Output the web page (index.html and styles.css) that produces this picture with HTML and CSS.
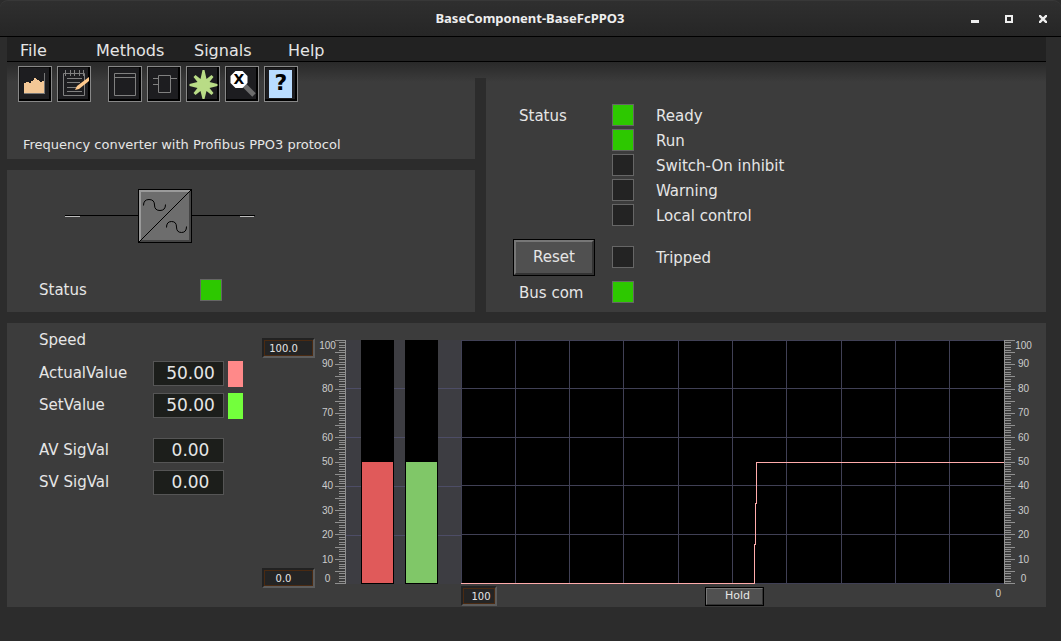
FILE: index.html
```
<!DOCTYPE html>
<html lang="en">
<head>
<meta charset="utf-8">
<title>BaseComponent-BaseFcPPO3</title>
<meta name="viewport" content="width=device-width, initial-scale=1.0">
<link rel="stylesheet" href="styles.css">
</head>

<body>
<header class="titlebar">
  <h1>BaseComponent-BaseFcPPO3</h1>
  <div class="winbuttons">
    <button aria-label="Minimize"><svg width="8" height="8"><path d="M0 5h8v3h-8z"/></svg></button>
    <button aria-label="Maximize"><svg width="8" height="8"><path fill-rule="evenodd" d="M0 0h8v8h-8zM2 2v4h4v-4z"/></svg></button>
    <button aria-label="Close"><svg width="8" height="8"><path d="M0 0L8 8M8 0L0 8" stroke="#eee" stroke-width="2.4"/></svg></button>
  </div>
</header>

<div class="window">
<nav class="menubar">
  <button>File</button>
  <button>Methods</button>
  <button>Signals</button>
  <button>Help</button>
</nav>

<main>
<div class="upper">
  <div class="left">
    <section class="head">
      <div class="toolbar">
        <button aria-label="Trend">
          <svg width="34" height="36"><path d="M6 17h2v-1h3v1h2v-2h2v-1h1v-2h2v1h1v1h2v1h1v1h2v-1h2v12h-20z" fill="#f3c796"/><path d="M26.5 7v21M6 27.5h21" stroke="#777"/></svg>
        </button>
        <button aria-label="Note">
          <svg width="34" height="36" fill="none"><path d="M6.5 7.5h21v22h-21zM8.5 4v6M13.5 4v6M17.5 4v6M22.5 4v6M26.5 4v6M10 12.5h15M10 16.5h13M10 21.5h10M10 25.5h15" stroke="#808080"/><path d="M18 24l2-4 12-9v4l-10 8z" fill="#ffc98c"/></svg>
        </button>
        <button class="gap" aria-label="Object graph">
          <svg width="34" height="36" fill="none"><path d="M6.5 7.5h21v22h-21zM6.5 11.5h21" stroke="#808080"/></svg>
        </button>
        <button aria-label="Type graph">
          <svg width="34" height="36" fill="none"><path d="M11.5 9.5h12v17h-12zM6 12.5h5M6 18.5h5M23 12.5h7" stroke="#808080"/></svg>
        </button>
        <button aria-label="Navigator">
          <svg width="34" height="36"><path d="M16.5 4h2l2 9 5-4 2 2-4 5 8 2v2l-8 2 4 5-2 2-5-4-2 8h-2l-2-8-5 4-2-2 4-5-8-2v-2l8-2-4-5 2-2 5 4z" fill="#b9dc86"/></svg>
        </button>
        <button aria-label="Crossreferences">
          <svg width="34" height="36"><path d="M19 19L29 29" stroke="#6c6c6c" stroke-width="5"/><path d="M10.5 5h7l5 5v7l-5 5h-7l-5-5v-7z" fill="#fff"/><text x="14" y="18" class="x">X</text></svg>
        </button>
        <button aria-label="Help">
          <svg width="34" height="36"><path d="M5 4h23v28h-23z" fill="#b9dcff"/><text x="17" y="24" class="q">?</text></svg>
        </button>
      </div>
      <p>Frequency converter with Profibus PPO3 protocol</p>
    </section>

    <section class="symbol">
      <svg width="190" height="54" fill="none" shape-rendering="crispEdges">
        <path d="M0 26.5h190" stroke="#000"/>
        <path d="M0 27.5h15M175 27.5h14" stroke="#bbb"/>
        <path d="M73 0h54v54h-54z" fill="#000"/>
        <path d="M74 1h52v52h-52z" fill="#6d6d6d"/>
        <path d="M74 53v-52h52l-2 2h-48v48z" fill="#9a9a9a"/>
        <path d="M126 1v52h-52l2-2h48v-48z" fill="#444"/>
        <path d="M74 53L126 1" stroke="#000"/>
        <g stroke="#000" shape-rendering="auto">
          <path d="M78.5 16.5q0-6 5.5-6t5.5 5.5t5.5 5.5t5.5-6"/>
          <path d="M101.5 38.5q0-6 5-6t5 5.5t5 5.5t5-6"/>
        </g>
      </svg>
      <div class="state"><span>Status</span><i class="led on"></i></div>
    </section>
  </div>

  <div class="divider"></div>

  <section class="status">
    <div class="row"><span>Status</span><i class="led on"></i><span>Ready</span></div>
    <div class="row"><span></span><i class="led on"></i><span>Run</span></div>
    <div class="row"><span></span><i class="led"></i><span>Switch-On inhibit</span></div>
    <div class="row"><span></span><i class="led"></i><span>Warning</span></div>
    <div class="row"><span></span><i class="led"></i><span>Local control</span></div>
    <div class="row trip"><button class="reset">Reset</button><i class="led"></i><span>Tripped</span></div>
    <div class="row bus"><span>Bus com</span><i class="led on"></i></div>
  </section>
</div>

<section class="speed">
  <div class="values">
    <h2>Speed</h2>
    <div class="val"><label for="av">ActualValue</label><input id="av" value="50.00" readonly><i class="red"></i></div>
    <div class="val"><label for="sv">SetValue</label><input id="sv" value="50.00" readonly><i class="green"></i></div>
    <div class="val sig"><label for="avs">AV SigVal</label><input id="avs" value="0.00" readonly></div>
    <div class="val"><label for="svs">SV SigVal</label><input id="svs" value="0.00" readonly></div>
  </div>

  <div class="limits">
    <input class="limit" aria-label="Max" value="100.0">
    <input class="limit" aria-label="Min" value="0.0">
  </div>

  <div class="scale">
    <ol><li>100<li>90<li>80<li>70<li>60<li>50<li>40<li>30<li>20<li>10<li>0</ol>
    <svg class="ticks" width="11" height="244"><path d="M10.5 0v244"/></svg>
  </div>

  <div class="bars">
    <div class="bar"><div class="fill av" style="height:50%"></div></div>
    <div class="bar"><div class="fill sv" style="height:50%"></div></div>
  </div>

  <div class="trend">
    <svg class="curve" viewBox="0 0 543 244" preserveAspectRatio="none">
      <path class="grid" d="M0 .5H543M0 48.5H543M0 97.5H543M0 145.5H543M0 194.5H543M0 243.5H543M.5 0V244M54.5 0V244M108.5 0V244M162.5 0V244M217.5 0V244M271.5 0V244M325.5 0V244M380.5 0V244M434.5 0V244M488.5 0V244"/>
      <path class="line" d="M0 243.5H293.5V204.5H294.5V163.5H295.5V122.5H543"/>
    </svg>
    <div class="time">
      <input class="limit" aria-label="Time range" value="100">
      <button class="hold">Hold</button>
      <span>0</span>
    </div>
  </div>

  <div class="scale right">
    <svg class="ticks" width="11" height="244"><path d="M.5 0v244"/></svg>
    <ol><li>100<li>90<li>80<li>70<li>60<li>50<li>40<li>30<li>20<li>10<li>0</ol>
  </div>
</section>
</main>
</div>

<script>
// one tick per unit, long tick every fifth
var scales = document.querySelectorAll('.ticks');
for (var n = 0; n < scales.length; n++) {
  var right = scales[n].parentNode.className.indexOf('right') > 0;
  var d = '';
  for (var i = 0; i <= 100; i++) {
    var y = Math.round(i * 243 / 100) + 0.5;
    var len = i % 5 ? 7 : 11;
    d += 'M' + (right ? 0 : 11 - len) + ' ' + y + 'h' + len;
  }
  var path = scales[n].querySelector('path');
  path.setAttribute('d', path.getAttribute('d') + d);
}
</script>
</body>
</html>
```
FILE: styles.css
```
* {
 box-sizing:border-box;
}
body {
 margin:0;
 min-height:100vh;
 background-color:#2c2c2c;
 color:#e6e6e6;
 font:15px/20px "DejaVu Sans", sans-serif;
}
button, input {
 margin:0;
 padding:0;
 border:0;
 border-radius:0;
 background:none;
 color:inherit;
 font:inherit;
}
h1, h2, p, ol {
 margin:0;
 padding:0;
 font-weight:normal;
 list-style:none;
}
svg {
 display:block;
}
.titlebar {
 display:grid;
 grid-template-columns:1fr auto 1fr;
 align-items:center;
 height:37px;
 padding-right:1px;
 background:linear-gradient(#2f2f2f,#262626);
 border-top:1px solid #383838;
 border-bottom:1px solid #000;
 border-radius:8px 8px 0 0;
}
.titlebar h1 {
 grid-column:2;
 padding-bottom:2px;
 color:#eee;
 font:bold 13px/20px "Noto Sans", sans-serif;
}
.winbuttons {
 display:flex;
 justify-content:flex-end;
}
.winbuttons button {
 display:flex;
 align-items:center;
 justify-content:center;
 width:34px;
 height:30px;
}
.winbuttons svg {
 fill:#eee;
}
.window {
 margin:0 15px 0 7px;
}
.menubar {
 display:grid;
 grid-template-columns:76px 98px 94px auto;
 justify-content:start;
 height:25px;
 padding:3px 0 0 13px;
 background-color:#222;
 border-bottom:1px solid #000;
}
.menubar button {
 text-align:left;
 font-size:16px;
 line-height:20px;
}
.upper {
 display:grid;
 grid-template-columns:468fr 11px 560fr;
 background:linear-gradient(#292929,#3c3c3c 20px);
}
.divider {
 margin-top:16px;
 background-color:#2c2c2c;
}
.head {
 height:97px;
}
.toolbar {
 display:flex;
 gap:5px;
 padding:4px 0 0 11px;
}
.toolbar button {
 width:34px;
 height:36px;
 background-color:#1d1d20;
 box-shadow:inset 0 0 0 1px #888, inset -3px -3px #000, inset 2px 2px #111;
}
.toolbar .gap {
 margin-left:12px;
}
.x, .q {
 font-weight:bold;
 font-size:14px;
 text-anchor:middle;
}
.q {
 font-size:22px;
}
.head p {
 padding:33px 0 0 16px;
 font-size:13px;
}
.symbol {
 height:153px;
 border-top:11px solid #2c2c2c;
 padding-top:19px;
}
.symbol svg {
 margin-left:58px;
}
.state {
 display:grid;
 grid-template-columns:161px 22px;
 align-items:center;
 padding:36px 0 0 32px;
}
.led {
 width:22px;
 height:22px;
 background-color:#232323;
 border:1px solid #666;
}
.led.on {
 background-color:#2dc800;
}
.status {
 padding:41px 0 2px 27px;
}
.row {
 display:grid;
 grid-template-columns:99px 44px auto;
 align-items:center;
 height:25px;
}
.row .led {
 margin-bottom:2px;
}
.row span:first-child {
 padding-left:6px;
}
.trip {
 height:37px;
 margin-top:11px;
}
.bus {
 height:34px;
}
.reset {
 width:82px;
 height:37px;
 padding-bottom:2px;
 background-color:#505050;
 border:3px solid;
 border-color:#777 #333 #333 #777;
 outline:1px solid #000;
 outline-offset:-1px;
}
.speed {
 display:flex;
 margin-top:11px;
 padding:17px 14px 0 32px;
 min-height:284px;
 background-color:#3c3c3c;
}
.values h2 {
 margin-top:-10px;
 font-size:15px;
 line-height:20px;
}
.values {
 width:223px;
}
.val {
 display:grid;
 grid-template-columns:114px 71px 15px;
 align-items:center;
 height:32px;
}
.values h2 + .val {
 margin-top:7px;
}
.val.sig {
 margin-top:13px;
}
.val input {
 width:71px;
 height:25px;
 padding-left:4px;
 background-color:#1c1e1b;
 border:1px solid #555;
 font-size:17px;
 text-align:center;
}
.val i {
 width:15px;
 height:26px;
 margin:2px 0 0 4px;
}
.red {
 background-color:#ff8989;
}
.green {
 background-color:#73ff3c;
}
.limits {
 display:flex;
 flex-direction:column;
 justify-content:space-between;
 width:58px;
 height:250px;
 margin-top:-2px;
}
.limit {
 width:53px;
 height:20px;
 padding:2px 10px 0 0;
 background-color:#242424;
 border:2px solid;
 border-color:#222 #5c5c5c #5c5c5c #222;
 box-shadow:inset 0 0 0 1px #4a2a12;
 font-size:10px;
 text-align:center;
}
.scale {
 display:flex;
 height:244px;
 color:#ccc;
 font:10px/10px "Liberation Sans", sans-serif;
}
.scale ol {
 display:flex;
 flex-direction:column;
 width:15px;
}
.scale.right ol {
 width:17px;
}
.scale li {
 display:flex;
 flex:2 1 0;
 align-items:center;
 justify-content:center;
}
.scale li:first-child {
 flex-grow:1;
}
.scale li:last-child {
 flex-grow:1;
 align-items:flex-end;
}
.ticks {
 stroke:#909090;
 shape-rendering:crispEdges;
}
.bars {
 display:flex;
 gap:11px;
 width:115px;
 height:244px;
 padding-left:15px;
 background:repeating-linear-gradient(#3d3d42 0 48px,#4d4d66 48px 49px);
}
.bar {
 display:flex;
 align-items:flex-end;
 width:33px;
 padding:0 1px 1px;
 background-color:#000;
}
.fill {
 width:100%;
}
.fill.av {
 background-color:#e05a5a;
}
.fill.sv {
 background-color:#80c768;
}
.trend {
 flex:1;
 min-width:0;
}
.curve {
 width:100%;
 height:244px;
 background-color:#000;
 fill:none;
 shape-rendering:crispEdges;
}
.grid {
 stroke:#404055;
}
.line {
 stroke:#ffacac;
}
.time {
 display:grid;
 grid-template-columns:1fr auto 1fr;
 align-items:center;
 padding-top:2px;
 font-size:11px;
}
.time .limit {
 width:36px;
 padding:2px 0 0 4px;
}
.time span {
 padding:0 3px 4px 0;
 text-align:right;
 color:#ccc;
 font:10px/16px "Liberation Sans", sans-serif;
}
.hold {
 width:59px;
 height:19px;
 margin-left:4px;
 padding:0 0 2px 6px;
 background-color:#505050;
 border:2px solid;
 border-color:#777 #333 #333 #777;
 outline:1px solid #000;
 outline-offset:-1px;
 line-height:13px;
}
```
